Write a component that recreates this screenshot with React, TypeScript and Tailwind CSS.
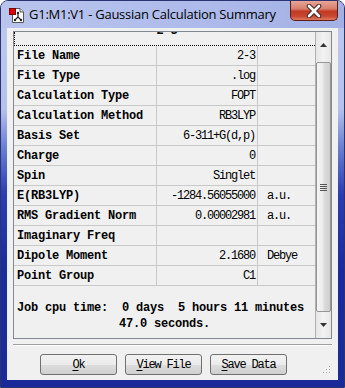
import React from "react";

const rows: [string, string, string][] = [
  ["File Name", "2-3", ""],
  ["File Type", ".log", ""],
  ["Calculation Type", "FOPT", ""],
  ["Calculation Method", "RB3LYP", ""],
  ["Basis Set", "6-311+G(d,p)", ""],
  ["Charge", "0", ""],
  ["Spin", "Singlet", ""],
  ["E(RB3LYP)", "-1284.56055000", "a.u."],
  ["RMS Gradient Norm", "0.00002981", "a.u."],
  ["Imaginary Freq", "", ""],
  ["Dipole Moment", "2.1680", "Debye"],
  ["Point Group", "C1", ""],
];

const mono = "font-['Liberation_Mono','DejaVu_Sans_Mono',monospace]";

function Btn({ u, rest }: { u: string; rest: string }) {
  return (
    <div className="w-[77px] h-[21px] rounded-[3px] border border-[#707070] bg-[linear-gradient(180deg,#f2f2f2_0%,#ebebeb_50%,#dddddd_51%,#cfcfcf_100%)] flex items-center justify-center">
      <span className={`${mono} text-[12px] tracking-[-1.2px] text-black whitespace-pre`}>
        <span className="underline underline-offset-2">{u}</span>
        {rest}
      </span>
    </div>
  );
}

export default function App() {
  return (
    <div className="w-[345px] h-[388px] overflow-hidden rounded-t-[8px] border border-[#2b3470] bg-[linear-gradient(180deg,#bfc9ee_0%,#b6c2ec_28%,#7084d4_37%,#2b3db2_50%,#1b2b9c_70%,#1a2a98_100%)] flex flex-col">
      {/* Title bar */}
      <div className="h-[27px] flex items-start bg-[linear-gradient(90deg,#bac5ee_0%,#adbaea_60%,#a2b0e4_100%)]">
        <svg className="ml-[8px] mt-[6px]" width="17" height="17" viewBox="0 0 17 17">
          <path d="M3.5 1.5 H11 L14.5 5 V15.5 H3.5 Z" fill="#fff" stroke="#555" />
          <path d="M11 1.5 V5 H14.5" fill="#e8e8e8" stroke="#555" />
          <rect x="0.5" y="1.5" width="6" height="6" fill="#e00000" stroke="#700" />
          <path d="M9 6 L9 10 L6 13 M9 10 L12 13" stroke="#222" strokeWidth="1.2" fill="none" />
          <circle cx="9" cy="6" r="1.2" fill="#222" />
          <circle cx="6" cy="13" r="1.2" fill="#222" />
          <circle cx="12" cy="13" r="1.2" fill="#222" />
        </svg>
        <div className="ml-[3px] mt-[4px] text-[13px] leading-[18px] text-black font-['Open_Sans','Noto_Sans',sans-serif] tracking-[-0.25px] whitespace-nowrap">
          G1:M1:V1 - Gaussian Calculation Summary
        </div>
        <div className="ml-auto mr-[6px] w-[48px] h-[20px] rounded-b-[5px] border border-t-0 border-[#5b1d14] bg-[linear-gradient(180deg,#e8a597_0%,#d9806d_40%,#c23a22_55%,#c8472f_80%,#dc7a5f_100%)] flex items-center justify-center">
          <svg width="16" height="14" viewBox="0 0 16 14">
            <path d="M3 2 L13 12 M13 2 L3 12" stroke="#4a2a28" strokeWidth="4.6" strokeLinecap="round" />
            <path d="M3 2 L13 12 M13 2 L3 12" stroke="#ffffff" strokeWidth="2.6" strokeLinecap="round" />
          </svg>
        </div>
      </div>

      {/* Client area */}
      <div className="mx-[6px] h-[352px] bg-[#f0f0f0] flex flex-col">
        {/* Panel */}
        <div className="ml-[6px] mt-[3px] w-[319px] h-[308px] border border-[#828790] bg-[#f0f0f0] flex">
          <div className="w-[301px] flex flex-col overflow-hidden">
            <div className="h-[14px] border-b border-l border-dotted border-black overflow-hidden flex justify-center">
              <div className={`${mono} font-bold text-[12px] leading-[12px] tracking-[-0.2px] -mt-[7px] pl-[4px]`}>2-3</div>
            </div>
            {rows.map(([a, b, c]) => (
              <div key={a} className="h-[20px] border-b border-[#c9c9c9] flex">
                <div className={`w-[143px] border-r border-[#c9c9c9] pl-[3px] flex items-center ${mono} font-bold text-[12px] tracking-[-0.2px] text-black whitespace-pre`}>
                  {a}
                </div>
                <div className={`w-[101px] border-r border-[#c9c9c9] pr-[2px] flex items-center justify-end ${mono} text-[12px] tracking-[-1.2px] text-black whitespace-pre`}>
                  {b}
                </div>
                <div className={`flex-1 pl-[9px] flex items-center ${mono} text-[12px] tracking-[-1.2px] text-black whitespace-pre`}>
                  {c}
                </div>
              </div>
            ))}
            <div className={`pt-[14px] ${mono} font-bold text-[12px] leading-[16px] tracking-[-0.2px] text-black whitespace-pre`}>
              <div className="pl-[3px]">Job cpu time:  0 days  5 hours 11 minutes</div>
              <div className="text-center">47.0 seconds.</div>
            </div>
          </div>
          {/* Scrollbar */}
          <div className="w-[16px] border-l border-[#b0b0b0] bg-[linear-gradient(90deg,#e6e6e6_0%,#f2f2f2_50%,#e6e6e6_100%)] flex flex-col">
            <div className="h-[26px] flex items-center justify-center">
              <svg width="7" height="4" viewBox="0 0 7 4"><path d="M0 4 L3.5 0 L7 4 Z" fill="#333" /></svg>
            </div>
            <div className="mt-[4px] h-[250px] rounded-[2px] border border-[#959595] bg-[linear-gradient(90deg,#f4f4f4_0%,#ececec_45%,#dcdcdc_55%,#cfcfcf_100%)] flex items-center justify-center">
              <svg width="7" height="8" viewBox="0 0 7 8">
                <path d="M0 1.5 H7 M0 3.5 H7 M0 5.5 H7 M0 7.5 H7" stroke="#555" strokeWidth="1" />
              </svg>
            </div>
            <div className="flex-1 flex items-center justify-center">
              <svg width="7" height="4" viewBox="0 0 7 4"><path d="M0 0 L3.5 4 L7 0 Z" fill="#333" /></svg>
            </div>
          </div>
        </div>

        {/* Separator */}
        <div className="ml-[6px] mt-[5px] w-[319px] h-[2px] border-t border-b border-t-[#a0a0a0] border-b-white" />

        {/* Buttons */}
        <div className="flex items-start pl-[33px] mt-[8px] gap-[8px] relative">
          <Btn u="O" rest="k" />
          <Btn u="V" rest="iew File" />
          <Btn u="S" rest="ave Data" />
          <svg className="absolute right-[7px] top-[11px]" width="10" height="10" viewBox="0 0 10 10">
            {[[8, 0], [8, 3], [5, 3], [8, 6], [5, 6], [2, 6]].map(([x, y], i) => (
              <rect key={i} x={x} y={y + 1} width="1" height="1" fill="#a8a8a8" />
            ))}
          </svg>
        </div>
      </div>
    </div>
  );
}
